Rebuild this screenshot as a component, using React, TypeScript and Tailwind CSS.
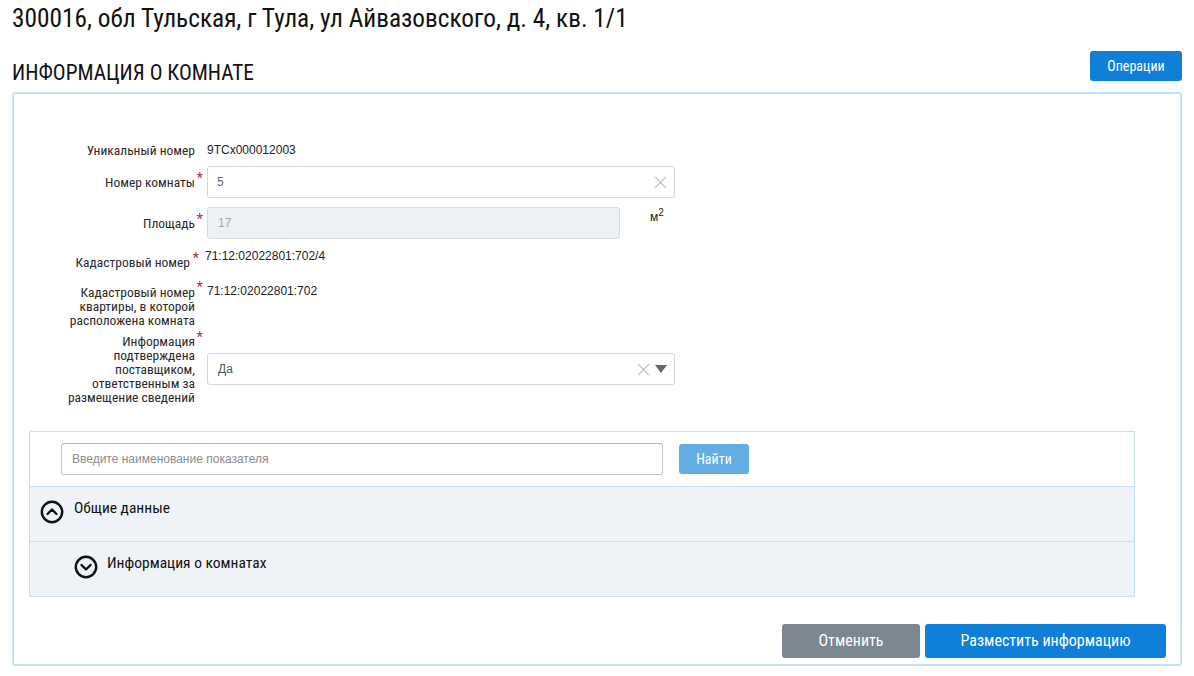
import React from 'react';

const cond = "font-['Roboto_Condensed',Roboto,sans-serif]";
const arial = "font-['Liberation_Sans',Arial,sans-serif]";

const Label = ({ children, className = 'w-[181px]' }: { children: React.ReactNode; className?: string }) => (
  <div className={`relative text-right text-[13.5px] leading-[14px] text-[#2a2a2a] ${className}`}>
    {children}
  </div>
);

const Req = ({ className = '' }: { className?: string }) => (
  <span className={`absolute right-[-8px] top-[-4px] text-[15px] leading-[15px] text-[#b5322c] ${className}`}>*</span>
);

const ClearIcon = () => (
  <svg width="13" height="13" viewBox="0 0 13 13">
    <path d="M1 1 L12 12 M12 1 L1 12" stroke="#b7c2cc" strokeWidth="1.2" fill="none" />
  </svg>
);

const CircleChevron = ({ up }: { up: boolean }) => (
  <svg width="24" height="24" viewBox="0 0 24 24">
    <circle cx="12" cy="12" r="10.2" stroke="#111" strokeWidth="2.4" fill="none" />
    {up ? (
      <path d="M7.5 14 L12 9.5 L16.5 14" stroke="#111" strokeWidth="2.4" fill="none" strokeLinecap="round" strokeLinejoin="round" />
    ) : (
      <path d="M7.5 10 L12 14.5 L16.5 10" stroke="#111" strokeWidth="2.4" fill="none" strokeLinecap="round" strokeLinejoin="round" />
    )}
  </svg>
);

export default function App() {
  return (
    <div className={`w-[1194px] h-[676px] bg-white text-[#222] ${cond}`}>
      <h1 className="pl-3 pt-[3px] text-[25.3px] leading-[32px] text-[#111]">
        300016, обл Тульская, г Тула, ул Айвазовского, д. 4, кв. 1/1
      </h1>

      <div className="mx-3 mt-[16px] flex items-end justify-between">
        <h2 className="text-[21.3px] leading-[24px] text-[#111] mb-[-4px]">ИНФОРМАЦИЯ О КОМНАТЕ</h2>
        <button className="h-[30px] w-[92px] rounded-[3px] bg-[#0f7fd8] text-[14px] text-white">Операции</button>
      </div>

      <div className="mx-3 mt-[11px] h-[574px] rounded-[3px] border-2 border-[#c6e1f5] pt-[49px]">
        {/* Уникальный номер */}
        <div className="flex items-center h-[14px]">
          <Label>Уникальный номер</Label>
          <div className="w-[12px]" />
          <div className={`${arial} text-[12px] leading-[14px]`}>9TCx000012003</div>
        </div>

        {/* Номер комнаты */}
        <div className="flex items-center mt-[9px]">
          <Label>Номер комнаты<Req /></Label>
          <div className="w-[12px]" />
          <div className="w-[468px] h-[32px] rounded-[3px] border border-[#d4d7da] bg-white flex items-center justify-between pl-[9px] pr-[7px]">
            <span className={`${arial} text-[12px] text-[#666]`}>5</span>
            <ClearIcon />
          </div>
        </div>

        {/* Площадь */}
        <div className="flex items-center mt-[9px]">
          <Label>Площадь<Req /></Label>
          <div className="w-[12px]" />
          <div className="w-[413px] h-[32px] rounded-[3px] border border-[#d9dcdf] bg-[#eef1f4] flex items-center pl-[10px]">
            <span className={`${arial} text-[12px] text-[#a5a9ad]`}>17</span>
          </div>
          <span className={`${arial} self-start ml-[30px] mt-[3px] text-[12px] leading-[14px] text-[#1a1a1a]`}>
            м<span className="relative top-[-5px] text-[10px]">2</span>
          </span>
        </div>

        {/* Кадастровый номер */}
        <div className="flex items-start mt-[10px]">
          <Label className="w-[176px] pt-[6px]">Кадастровый номер<Req className="right-[-9px] top-[2px]" /></Label>
          <div className="w-[15px]" />
          <div className={`${arial} text-[12px] leading-[14px]`}>71:12:02022801:702/4</div>
        </div>

        {/* Кадастровый номер квартиры */}
        <div className="flex items-start mt-[15px]">
          <Label className="w-[181px] pt-[1px]">
            Кадастровый номер<br />квартиры, в которой<br />расположена комната<Req className="top-[-3px]" />
          </Label>
          <div className="w-[12px]" />
          <div className={`${arial} text-[12px] leading-[14px]`}>71:12:02022801:702</div>
        </div>

        {/* Информация подтверждена */}
        <div className="flex items-center mt-[7px]">
          <Label>
            Информация<br />подтверждена<br />поставщиком,<br />ответственным за<br />размещение сведений<Req />
          </Label>
          <div className="w-[12px]" />
          <div className="w-[468px] h-[32px] rounded-[3px] border border-[#d4d7da] bg-white flex items-center justify-between pl-[10px] pr-[7px]">
            <span className={`${arial} text-[12px] text-[#555]`}>Да</span>
            <div className="flex items-center gap-[5px]">
              <ClearIcon />
              <svg width="12" height="8" viewBox="0 0 12 8">
                <path d="M0 0 L12 0 L6 8 Z" fill="#666" />
              </svg>
            </div>
          </div>
        </div>

        {/* Показатели */}
        <div className="ml-[15px] mt-[27px] w-[1106px] border border-[#c9dff0]">
          <div className="flex items-center pl-[31px] py-[11px] border-b border-[#c9dff0]">
            <div className="w-[602px] h-[32px] rounded-[3px] border border-[#c4c7ca] border-t-[#b0b3b6] flex items-center pl-[10px]">
              <span className={`${arial} text-[12px] text-[#8a8d90]`}>Введите наименование показателя</span>
            </div>
            <button className="ml-[16px] w-[70px] h-[30px] rounded-[3px] bg-[#62ade4] text-white text-[14px]">Найти</button>
          </div>
          <div className="h-[55px] bg-[#eff3f7] border-b border-[#c9dff0] flex items-start pl-[10px] pt-[13px]">
            <CircleChevron up />
            <span className="ml-[10px] mt-[-2px] text-[15.5px] leading-[20px] text-[#111]">Общие данные</span>
          </div>
          <div className="h-[54px] bg-[#eff3f7] flex items-start pl-[44px] pt-[13px]">
            <CircleChevron up={false} />
            <span className="ml-[9px] mt-[-2px] text-[15.5px] leading-[20px] text-[#111]">Информация о комнатах</span>
          </div>
        </div>

        <div className="mt-[27px] mr-[14px] flex justify-end gap-[5px]">
          <button className="w-[138px] h-[34px] rounded-[3px] bg-[#7b8791] text-white text-[16px]">Отменить</button>
          <button className="w-[241px] h-[34px] rounded-[3px] bg-[#0f7fd8] text-white text-[16px]">Разместить информацию</button>
        </div>
      </div>
    </div>
  );
}
